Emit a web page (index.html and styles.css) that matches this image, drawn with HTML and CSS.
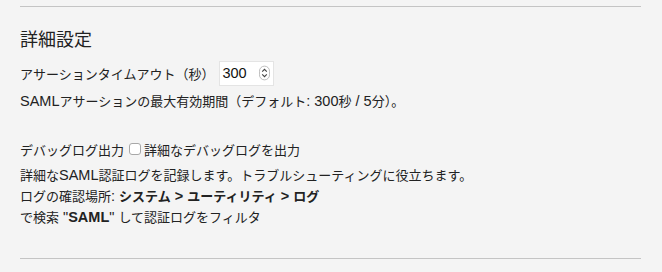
FILE: index.html
```html
<!DOCTYPE html>
<html lang="ja">
<head>
<meta charset="utf-8">
<link rel="stylesheet" href="styles.css">
</head>
<body>
<div class="page">
  <hr class="rule">
  <section class="section">
    <h2 class="title">詳細設定</h2>
    <div class="field-row">
      <label class="label">アサーションタイムアウト（秒）</label>
      <span class="number">
        <input class="number-input" type="text" value="300">
        <svg class="spinner" width="12" height="16" viewBox="0 0 12 16">
          <rect x="0.5" y="0.5" width="11" height="15" rx="5.5" fill="#fff" stroke="#b8b8b8"/>
          <path d="M3.5 6.5 L6 4 L8.5 6.5" fill="none" stroke="#444" stroke-width="1.2"/>
          <path d="M3.5 9.5 L6 12 L8.5 9.5" fill="none" stroke="#444" stroke-width="1.2"/>
        </svg>
      </span>
    </div>
    <p class="desc"><span class="lat">SAML</span>アサーションの最大有効期間（デフォルト<span class="lat">: 300</span>秒<span class="lat"> / 5</span>分）。</p>

    <div class="check-row">
      <span class="label">デバッグログ出力</span>
      <span class="checkbox"></span>
      <span class="check-text">詳細なデバッグログを出力</span>
    </div>
    <div class="notes">
      <p class="note">詳細な<span class="lat">SAML</span>認証ログを記録します。トラブルシューティングに役立ちます。</p>
      <p class="note">ログの確認場所<span class="lat">: </span><b>システム<span class="lat"> &gt; </span>ユーティリティ<span class="lat"> &gt; </span>ログ</b></p>
      <p class="note">で検索<span class="lat"> "<b>SAML</b>" </span>して認証ログをフィルタ</p>
    </div>
  </section>
  <hr class="rule bottom">
</div>
</body>
</html>
```

FILE: styles.css
```css
html, body {
  margin: 0;
  padding: 0;
  background: #f4f4f4;
}
body {
  font-family: "Liberation Sans", "Noto Sans CJK JP", sans-serif;
  color: #222;
  font-size: 13px;
}
.page {
  width: 621px;
  padding: 6px 0 0 20px;
}
.rule {
  margin: 0;
  border: 0;
  border-top: 1px solid #c4c4c4;
  height: 0;
}
.rule.bottom {
  margin-top: 30px;
}
.section {
  padding-top: 21px;
}
.title {
  margin: 0;
  font-size: 18px;
  font-weight: normal;
  line-height: 25px;
  color: #222;
}
.lat {
  font-size: 14.5px;
}
.field-row {
  display: flex;
  align-items: center;
  margin-top: 7px;
  height: 26px;
}
.label {
  color: #222;
}
.number {
  display: flex;
  align-items: center;
  margin-left: 5px;
  width: 55px;
  height: 25px;
  background: #fff;
  border: 1px solid #e4e4e4;
  box-sizing: border-box;
  padding: 0 3px 0 2px;
}
.number-input {
  border: 0;
  outline: none;
  background: transparent;
  font: inherit;
  font-size: 14.5px;
  color: #111;
  width: 37px;
  padding: 0;
}
.spinner {
  display: block;
}
.desc {
  margin: 5px 0 0;
  line-height: 20px;
}
.check-row {
  display: flex;
  align-items: center;
  margin-top: 27px;
  height: 20px;
}
.checkbox {
  width: 10px;
  height: 10px;
  border: 1px solid #a8a8a8;
  border-radius: 3px;
  background: #fff;
  margin: 0 3px 0 5px;
}
.notes {
  margin-top: 6px;
}
.note {
  margin: 0;
  line-height: 21px;
}
.note b {
  font-weight: bold;
}
```
